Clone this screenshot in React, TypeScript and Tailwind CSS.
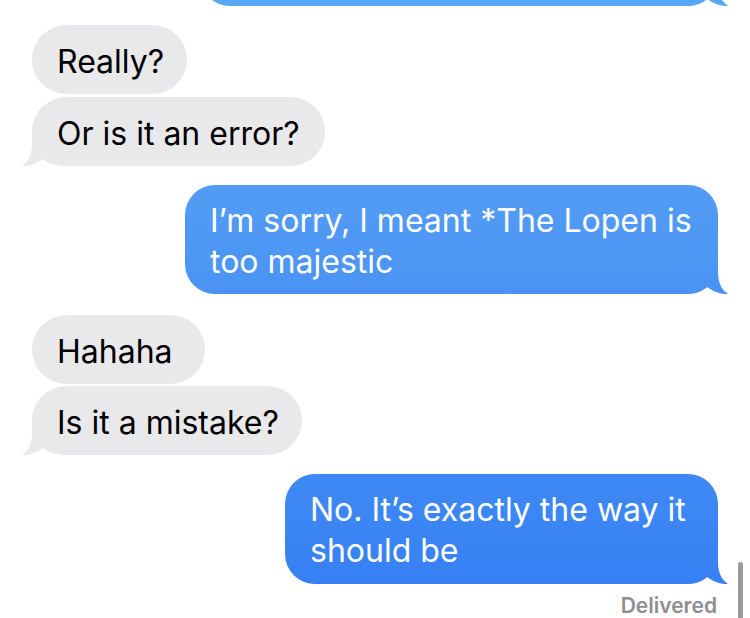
import type { ReactNode } from 'react'

const font = { fontFamily: 'Inter, "Noto Sans", sans-serif' }

function LeftTail() {
    return (
        <svg
            className="absolute -left-[10px] bottom-0"
            width="46"
            height="36"
            viewBox="0 0 46 36"
        >
            <path
                d="M10 0 L10 14 C10 25 6 32 0 36 C8 36.5 15 33 21 29 C27 34 35 36 46 36 L46 0 Z"
                fill="#e9e9eb"
            />
        </svg>
    )
}

function RightTail({ id, from, to }: { id: string; from: string; to: string }) {
    return (
        <svg
            className="absolute -right-[10px] bottom-0"
            width="46"
            height="36"
            viewBox="0 0 46 36"
        >
            <defs>
                <linearGradient id={id} x1="0" y1="0" x2="0" y2="1">
                    <stop offset="0" stopColor={from} />
                    <stop offset="1" stopColor={to} />
                </linearGradient>
            </defs>
            <path
                d="M36 0 L36 14 C36 25 40 32 46 36 C38 36.5 31 33 25 29 C19 34 11 36 0 36 L0 0 Z"
                fill={`url(#${id})`}
            />
        </svg>
    )
}

function Received({ children, width, tail }: { children: ReactNode; width: string; tail?: boolean }) {
    return (
        <div
            className={`relative ml-8 rounded-[35px] bg-[#e9e9eb] pl-[25px] pt-[16px] pb-[12px] text-[32px] leading-[41px] text-black ${width}`}
        >
            {tail && <LeftTail />}
            <span className="relative whitespace-nowrap">{children}</span>
        </div>
    )
}

export default function App() {
    return (
        <div className="relative h-[618px] w-[750px] bg-white" style={font}>
            <div className="flex flex-col">
                {/* earlier message, mostly scrolled away */}
                <div className="relative -mt-[54px] mr-8 h-[60px] w-[518px] self-end rounded-[30px] bg-[#58a6f6]">
                    <RightTail id="t0" from="#58a6f6" to="#58a6f6" />
                </div>

                <div className="mt-[19px] flex flex-col gap-[3px]">
                    <Received width="w-[155px]">Really?</Received>
                    <Received width="w-[293px]" tail>
                        Or is it an error?
                    </Received>
                </div>

                <div className="relative mt-[19px] mr-8 w-[533px] self-end rounded-[30px] bg-linear-to-b from-[#539cf5] to-[#4a93f3] pl-[25px] pt-[15px] pb-[12px] text-[32px] leading-[41px] text-white">
                    <RightTail id="t1" from="#4d96f4" to="#4a93f3" />
                    <p className="relative whitespace-nowrap">
                        I’m sorry, I meant *The Lopen is
                        <br />
                        too majestic
                    </p>
                </div>

                <div className="mt-[21px] flex flex-col gap-[2px]">
                    <Received width="w-[173px]">Hahaha</Received>
                    <Received width="w-[270px]" tail>
                        Is it a mistake?
                    </Received>
                </div>

                <div className="relative mt-[19px] mr-8 w-[433px] self-end rounded-[30px] bg-linear-to-b from-[#3f89f5] to-[#3680f4] pl-[25px] pt-[15px] pb-[13px] text-[32px] leading-[41px] text-white">
                    <RightTail id="t2" from="#3983f4" to="#3680f4" />
                    <p className="relative whitespace-nowrap">
                        No. It’s exactly the way it
                        <br />
                        should be
                    </p>
                </div>

                <p className="mt-[12px] mr-[33px] self-end text-[21px] font-semibold leading-[20px] text-[#8e8e93]">
                    Delivered
                </p>
            </div>

            {/* scroll indicator */}
            <div className="absolute left-[738px] top-[562px] h-[56px] w-[5px] rounded-t-full bg-[#9a9a9a]" />
        </div>
    )
}
